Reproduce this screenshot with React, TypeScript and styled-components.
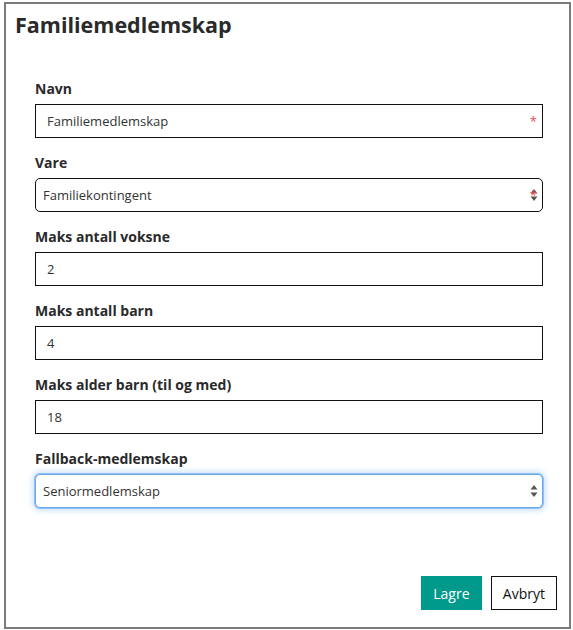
import styled, { createGlobalStyle } from 'styled-components'

const GlobalStyle = createGlobalStyle`
  html, body {
    margin: 0;
    padding: 0;
    background: #ffffff;
  }
  body {
    font-family: "Open Sans", "Noto Sans", sans-serif;
    color: #222;
  }
`

const Dialog = styled.div`
  box-sizing: border-box;
  margin: 2px 2px 0 4px;
  width: 567px;
  height: 627px;
  border: 2px solid #7b7b7b;
  background: #fff;
  display: flex;
  flex-direction: column;
`

const Title = styled.h2`
  margin: 0;
  padding: 6px 9px 0;
  font-size: 21.5px;
  font-weight: 700;
  color: #2a2a2a;
  line-height: 29px;
`

const Form = styled.form`
  display: flex;
  flex-direction: column;
  gap: 15px;
  padding: 40px 26px 0 29px;
  flex: 1;
`

const Field = styled.div`
  display: flex;
  flex-direction: column;
  gap: 5px;
`

const Label = styled.label`
  font-size: 14px;
  font-weight: 700;
  line-height: 20px;
  color: #2a2a2a;
`

const Control = styled.div`
  position: relative;
`

const Input = styled.input`
  box-sizing: border-box;
  display: block;
  width: 100%;
  height: 34px;
  padding: 0 11px;
  border: 1.5px solid #111;
  border-radius: 0;
  font-family: inherit;
  font-size: 13px;
  color: #333;
  outline: none;
`

const Select = styled.select<{ $focused?: boolean }>`
  box-sizing: border-box;
  display: block;
  width: 100%;
  height: 34px;
  padding: 0 24px 0 7px;
  appearance: none;
  border: 1px solid ${p => (p.$focused ? '#6aa8ee' : '#111')};
  border-radius: 5px;
  background: #fff;
  font-family: inherit;
  font-size: 13px;
  color: #333;
  outline: none;
  box-shadow: ${p => (p.$focused ? '0 0 0 1px #8fc0f6, 0 0 6px 2px rgba(120, 175, 240, 0.45)' : 'none')};
`

const Required = styled.span`
  position: absolute;
  right: 6px;
  top: 50%;
  transform: translateY(-44%);
  color: #f0474c;
  font-size: 13px;
  line-height: 1;
  pointer-events: none;
`

const Arrows = styled.svg`
  position: absolute;
  right: 5px;
  top: 50%;
  transform: translateY(-50%);
  pointer-events: none;
`

const Footer = styled.div`
  display: flex;
  justify-content: flex-end;
  gap: 9px;
  padding: 0 12px 17px 0;
`

const Button = styled.button<{ $primary?: boolean }>`
  box-sizing: border-box;
  height: 34px;
  padding: 0 11px;
  min-width: ${p => (p.$primary ? '61px' : '65px')};
  font-family: inherit;
  font-size: 14px;
  border: 1px solid ${p => (p.$primary ? '#009a8c' : '#111')};
  background: ${p => (p.$primary ? '#009a8c' : '#fff')};
  color: ${p => (p.$primary ? '#fff' : '#111')};
  cursor: pointer;
`

const SelectArrows = () => (
  <Arrows width="8" height="14" viewBox="0 0 8 14">
    <path d="M4 1 L7.5 5.5 H0.5 Z" fill="#555" />
    <path d="M4 13 L7.5 8.5 H0.5 Z" fill="#555" />
  </Arrows>
)

export default function App() {
  return (
    <>
      <GlobalStyle />
      <Dialog>
        <Title>Familiemedlemskap</Title>
        <Form onSubmit={e => e.preventDefault()}>
          <Field>
            <Label>Navn</Label>
            <Control>
              <Input defaultValue="Familiemedlemskap" />
              <Required>*</Required>
            </Control>
          </Field>
          <Field>
            <Label>Vare</Label>
            <Control>
              <Select defaultValue="Familiekontingent">
                <option>Familiekontingent</option>
              </Select>
              <SelectArrows />
              <Required>*</Required>
            </Control>
          </Field>
          <Field>
            <Label>Maks antall voksne</Label>
            <Input defaultValue="2" />
          </Field>
          <Field>
            <Label>Maks antall barn</Label>
            <Input defaultValue="4" />
          </Field>
          <Field>
            <Label>Maks alder barn (til og med)</Label>
            <Input defaultValue="18" />
          </Field>
          <Field>
            <Label>Fallback-medlemskap</Label>
            <Control>
              <Select $focused defaultValue="Seniormedlemskap">
                <option>Seniormedlemskap</option>
              </Select>
              <SelectArrows />
            </Control>
          </Field>
        </Form>
        <Footer>
          <Button $primary>Lagre</Button>
          <Button>Avbryt</Button>
        </Footer>
      </Dialog>
    </>
  )
}
